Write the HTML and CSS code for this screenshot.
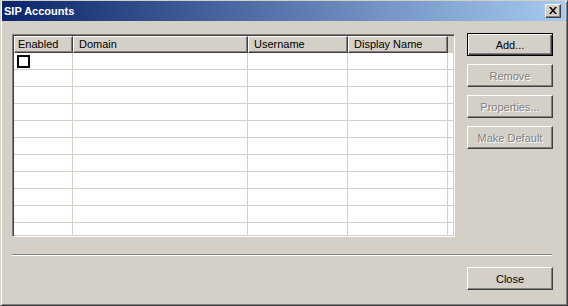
FILE: index.html
```html
<!DOCTYPE html>
<html lang="en">
<head>
  <meta charset="UTF-8" />
  <title>SIP Accounts</title>
  <link rel="stylesheet" href="styles.css">
</head>
<body>
  <div class="window">
    <div class="titlebar">
      <span class="title">SIP Accounts</span>
      <button class="caption-btn" aria-label="Close">
        <svg width="8" height="7" viewBox="0 0 8 7">
          <path d="M0 0h2l2 2.5L6 0h2L5 3.5 8 7H6L4 4.5 2 7H0l3-3.5z" fill="#000"/>
        </svg>
      </button>
    </div>

    <div class="content">
      <div class="listview">
        <div class="list-header">
          <div class="col col-enabled">Enabled</div>
          <div class="col col-domain">Domain</div>
          <div class="col col-user">Username</div>
          <div class="col col-display">Display Name</div>
        </div>
        <div class="list-body">
          <div class="row">
            <div class="cell col-enabled"><span class="check"></span></div>
            <div class="cell col-domain"></div>
            <div class="cell col-user"></div>
            <div class="cell col-display"></div>
          </div>
          <div class="row"><div class="cell col-enabled"></div><div class="cell col-domain"></div><div class="cell col-user"></div><div class="cell col-display"></div></div>
          <div class="row"><div class="cell col-enabled"></div><div class="cell col-domain"></div><div class="cell col-user"></div><div class="cell col-display"></div></div>
          <div class="row"><div class="cell col-enabled"></div><div class="cell col-domain"></div><div class="cell col-user"></div><div class="cell col-display"></div></div>
          <div class="row"><div class="cell col-enabled"></div><div class="cell col-domain"></div><div class="cell col-user"></div><div class="cell col-display"></div></div>
          <div class="row"><div class="cell col-enabled"></div><div class="cell col-domain"></div><div class="cell col-user"></div><div class="cell col-display"></div></div>
          <div class="row"><div class="cell col-enabled"></div><div class="cell col-domain"></div><div class="cell col-user"></div><div class="cell col-display"></div></div>
          <div class="row"><div class="cell col-enabled"></div><div class="cell col-domain"></div><div class="cell col-user"></div><div class="cell col-display"></div></div>
          <div class="row"><div class="cell col-enabled"></div><div class="cell col-domain"></div><div class="cell col-user"></div><div class="cell col-display"></div></div>
          <div class="row"><div class="cell col-enabled"></div><div class="cell col-domain"></div><div class="cell col-user"></div><div class="cell col-display"></div></div>
          <div class="row"><div class="cell col-enabled"></div><div class="cell col-domain"></div><div class="cell col-user"></div><div class="cell col-display"></div></div>
        </div>
      </div>

      <div class="side-buttons">
        <button class="btn default">Add...</button>
        <button class="btn" disabled>Remove</button>
        <button class="btn" disabled>Properties...</button>
        <button class="btn" disabled>Make Default</button>
      </div>
    </div>

    <div class="separator"></div>

    <div class="footer">
      <button class="btn">Close</button>
    </div>
  </div>
</body>
</html>
```

FILE: styles.css
```css
* {
  margin: 0;
  padding: 0;
  box-sizing: border-box;
}

body {
  font-family: 'Liberation Sans', Arial, sans-serif;
  font-size: 11px;
  color: #000;
  background: #d4d0c8;
}

.window {
  width: 568px;
  height: 306px;
  background: #d4d0c8;
  border: 1px solid;
  border-color: #d4d0c8 #404040 #404040 #d4d0c8;
  box-shadow: inset 1px 1px #fff, inset -1px -1px #808080;
  padding: 0 2px 2px 1px;
  display: flex;
  flex-direction: column;
}

.titlebar {
  height: 20px;
  background: linear-gradient(to right, #0a246a, #a6caf0);
  display: flex;
  align-items: center;
  justify-content: space-between;
  padding: 0 4px 0 2px;
}

.title {
  color: #fff;
  font-weight: bold;
  font-size: 11px;
}

.caption-btn {
  width: 16px;
  height: 14px;
  background: #d4d0c8;
  border: 1px solid;
  border-color: #fff #404040 #404040 #fff;
  box-shadow: inset -1px -1px #808080;
  display: flex;
  align-items: center;
  justify-content: center;
  padding-bottom: 1px;
}

.content {
  display: flex;
  gap: 12px;
  padding: 13px 0 0 10px;
}

.listview {
  width: 443px;
  height: 203px;
  background: #fff;
  border: 1px solid;
  border-color: #808080 #fff #fff #808080;
  box-shadow: inset 1px 1px #404040, inset -1px -1px #d4d0c8;
  padding: 1px;
  overflow: hidden;
  display: flex;
  flex-direction: column;
}

.list-header {
  display: flex;
  height: 17px;
  background: #d4d0c8;
  width: 439px;
  flex-shrink: 0;
}

.list-header .col {
  height: 17px;
  line-height: 15px;
  padding-left: 5px;
  border: 1px solid;
  border-color: #fff #404040 #404040 #fff;
  box-shadow: inset -1px -1px #808080;
  white-space: nowrap;
  overflow: hidden;
}

.list-header .col-enabled {
  padding-left: 3px;
}

.col-enabled { width: 59px; }
.col-domain { width: 175px; }
.col-user { width: 100px; }
.col-display { width: 100px; }

.list-body {
  flex: 1;
  overflow: hidden;
}

.row {
  display: flex;
  height: 17px;
  border-bottom: 1px solid #d4d0c8;
}

.cell {
  height: 16px;
  border-right: 1px solid #d4d0c8;
  flex-shrink: 0;
}

.cell.col-enabled {
  padding: 2px 0 0 3px;
}

.check {
  display: block;
  width: 13px;
  height: 13px;
  border: 2px solid #000;
  background: #fff;
}

.side-buttons {
  display: flex;
  flex-direction: column;
  gap: 8px;
  margin-top: -1px;
}

.btn {
  width: 86px;
  height: 23px;
  font-family: 'Liberation Sans', Arial, sans-serif;
  font-size: 11px;
  color: #000;
  background: #d4d0c8;
  border: 1px solid;
  border-color: #fff #404040 #404040 #fff;
  box-shadow: inset -1px -1px #808080;
}

.btn.default {
  border: 1px solid #000;
  box-shadow: inset 1px 1px #fff, inset -1px -1px #404040, inset -2px -2px #808080;
}

.btn:disabled {
  color: #808080;
  text-shadow: 1px 1px #fff;
}

.separator {
  margin: 17px 13px 0 10px;
  height: 2px;
  border-top: 1px solid #808080;
  border-bottom: 1px solid #fff;
}

.footer {
  display: flex;
  justify-content: flex-end;
  padding: 11px 12px 0 0;
}
```
